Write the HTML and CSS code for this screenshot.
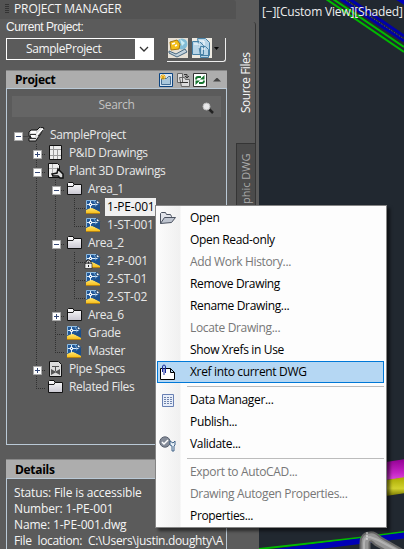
FILE: index.html
```html
<!DOCTYPE html>
<html lang="en">
<head>
<meta charset="utf-8">
<title>Project Manager</title>
<link rel="stylesheet" href="styles.css">
</head>
<body>
<svg class="defs" width="0" height="0" aria-hidden="true">
  <defs>
    <linearGradient id="fold" x1="0" y1="0" x2="0" y2="1"><stop offset="0" stop-color="#fff"/><stop offset="1" stop-color="#c9c7d1"/></linearGradient>
    <linearGradient id="gold" x1="0" y1="0" x2="0" y2="1"><stop offset="0" stop-color="#ffe670"/><stop offset="1" stop-color="#f5b80c"/></linearGradient>
    <linearGradient id="magenta" x1="0" y1="0" x2="0" y2="1"><stop offset="0" stop-color="#920092"/><stop offset=".65" stop-color="#c424c4"/><stop offset="1" stop-color="#dc48dc"/></linearGradient>
    <linearGradient id="yellow" x1="0" y1="0" x2="0" y2="1"><stop offset="0" stop-color="#a9a900"/><stop offset=".6" stop-color="#d2d22e"/><stop offset="1" stop-color="#777700"/></linearGradient>
    <symbol id="plus" viewBox="0 0 9 9"><path fill="#fff" stroke="#aaa" d="M.5.5h8v8h-8z"/><path stroke="#354875" d="M2 4.5h5M4.500 2v5"/></symbol>
    <symbol id="minus" viewBox="0 0 9 9"><path fill="#fff" stroke="#aaa" d="M.5.5h8v8h-8z"/><path stroke="#354875" d="M2 4.5h5"/></symbol>
    <symbol id="folder" viewBox="0 0 16 16"><path fill="url(#fold)" stroke="#111" d="M.5 13.500v-11l1-1H6l1 2h7.500v10z"/><path fill="none" stroke="#222" d="M1 5.500h5l1-2"/></symbol>
    <symbol id="dwg" viewBox="0 0 16 16"><path fill="#215898" d="M0 1h11l3 3v11H0z"/><path fill="none" stroke="#8fbbe0" d="M.5 10V1.500H10"/><path fill="none" stroke="#dcecf8" d="M4.500 2v8M1 5.500h10.500"/><path fill="#215898" stroke="#fff" d="M3.500 4.500h2v2h-2z"/><path fill="none" stroke="#8fbbe0" stroke-width=".8" d="M8 2q2 2 2 6"/><path fill="#fff" stroke="#173960" stroke-width=".6" d="M10.500 1v3.500H14z"/><path fill="url(#gold)" d="M0 11q4-2 6-2 4 1 8 4v2H0z"/><path fill="#1b4f8b" d="M7 9l7-4v7q-3 0-7-3z"/><path stroke="#b58212" d="M0 14.500h14"/></symbol>
    <symbol id="sheet" viewBox="0 0 16 16"><path fill="#ededed" stroke="#111" d="M1.500.5h12v14h-12z"/><path fill="none" stroke="#999" d="M5.500 1v13M2 4.500h11M9.500 5v9M2 10.500h11"/></symbol>
    <symbol id="plant" viewBox="0 0 16 16"><path fill="#eee" stroke="#111" d="M.5.5h9l2 2v12H.5z"/><path fill="none" stroke="#aaa" d="M4.500 1v13M1 5.500h10"/><path fill="#ddd" stroke="#111" stroke-width="1.500" d="M10 6l5 5v4h-3l-2-2H5l-1-2 5-1z"/></symbol>
    <symbol id="valve" viewBox="0 0 16 16"><path fill="#ddd" stroke="#111" d="M1.500.5h9l3 3v12h-12z"/><path stroke="#555" d="M7.500 5v5M4 5.500h7"/><path fill="#555" d="M3 8l4.500 2.500L12 8v6l-4.500-2.500L3 14z"/></symbol>
    <symbol id="root" viewBox="0 0 18 16"><path fill="#ddd" stroke="#111" d="M1 5l2-2h6l3-3 4 1-4 7-3 4-1 2H1v-3h2V9H1z"/><path stroke="#fff" stroke-width="2" d="M3 5h5M3 9h4M9 8l6-6"/><path stroke="#333" d="M2 7.500h6M2 11.500h6M10 9l5-6"/></symbol>
  </defs>
</svg>
<div class="app">
  <aside class="palette">
    <header class="titlebar"><span class="grip"></span><span class="palette-title">PROJECT MANAGER</span></header>
    <div class="palette-body">
      <main class="content">
        <div class="current">Current Project:</div>
        <div class="toolbar">
          <div class="combo"><span>SampleProject</span><i><svg width="10" height="7"><path fill="none" stroke="#333" stroke-width="1.300" d="M1 1l4 4 4-4"/></svg></i></div>
          <div class="tools">
            <svg width="20" height="20"><path fill="#e7e0d5" d="M0 0h20v20H0z"/><circle cx="14" cy="6" r="5.500" fill="#82bdd7"/><path fill="#c9edf5" d="M12 1l5 4-3 3z"/><path fill="#f4bf19" stroke="#a87913" d="M2 4l7-2 3 4-1 5-8 1z"/><path stroke="#fff" stroke-width="1.500" d="M4 6l3-1M7 8l2-1"/><path fill="#c3d2dc" stroke="#47677f" d="M1 13l7 3 9-5 2 3-10 5-8-4z"/></svg>
            <svg width="20" height="20"><path fill="#eeeae1" d="M0 0h20v20H0z"/><path fill="#b8d5e7" stroke="#4881a5" d="M5.500.5h8l4 4v13h-9zM.5 3.500h7l4 4v9h-11zM8.500 8.500h5l3 3v8h-8z"/><path fill="none" stroke="#fff" d="M7 3h5v4M2 6h5v4M10 11h3"/></svg>
            <span class="caret"></span>
          </div>
        </div>
        <section class="pane project">
          <div class="pane-head"><span>Project</span>
            <div class="pane-tools">
              <svg width="14" height="14"><path fill="#d5e5f3" stroke="#0b4380" d="M.5.500h13v13H.5z"/><path fill="#a9c7dc" stroke="#466f95" d="M2.500 11.500v-6h5l2-2h2v8z"/><path stroke="#f2a900" d="M4 1v6M1 4h6M2 2l4 4M6 2L2 6"/></svg>
              <svg width="14" height="14"><path fill="#ddd" stroke="#666" d="M1.500.5h5v9h-5zM3.500 4.500h5l1 2h4v7h-8z"/><path fill="none" stroke="#333" d="M8 1.500h3v3M9 3l2 2 2-2M4 9.500h8"/></svg>
              <svg width="14" height="14"><path fill="#fff" stroke="#333" d="M.5.500h13v13H.5z"/><path fill="none" stroke="#14752e" stroke-width="1.800" d="M3 6.500Q3 4 5 4h3M11 7.500Q11 10 9 10H6"/><path fill="#14752e" d="M7 6.500h4.500V2zM7 7.500H2.500V12z"/></svg>
              <span class="collapse"></span>
            </div>
          </div>
          <div class="search"><span>Search</span><svg width="12" height="12"><path stroke="#222" stroke-width="2.500" d="M7 7l4 4"/><circle cx="4.500" cy="4.500" r="3.500" fill="#e8e8ea" stroke="#bbb"/></svg></div>
          <div class="tree">
            <svg class="guides" width="110" height="270" viewBox="8 125 110 270"><path fill="none" stroke="#303030" stroke-dasharray="1 1" d="M37.500 143v244M37.500 135.500H18M37 153.500h10M37 171.500h10M37 369.500h10M37 387.500h10M56.500 179v173M56 189.500h10M56 243.500h10M56 315.500h10M56 333.500h10M56 351.500h10M75.500 197v29M75 207.500h11M75 225.500h11M75.500 251v47M75 261.500h11M75 279.500h11M75 297.500h11"/></svg>
            <div class="row l0"><svg class="toggle"><use href="#minus"/></svg><svg class="icon root"><use href="#root"/></svg><span>SampleProject</span></div>
            <div class="row l1"><svg class="toggle"><use href="#plus"/></svg><svg class="icon"><use href="#sheet"/></svg><span>P&amp;ID Drawings</span></div>
            <div class="row l1"><svg class="toggle"><use href="#minus"/></svg><svg class="icon"><use href="#plant"/></svg><span>Plant 3D Drawings</span></div>
            <div class="row l2"><svg class="toggle"><use href="#minus"/></svg><svg class="icon"><use href="#folder"/></svg><span>Area_1</span></div>
            <div class="row l3"><svg class="icon"><use href="#dwg"/></svg><span class="selected">1-PE-001</span></div>
            <div class="row l3"><svg class="icon"><use href="#dwg"/></svg><span>1-ST-001</span></div>
            <div class="row l2"><svg class="toggle"><use href="#minus"/></svg><svg class="icon"><use href="#folder"/></svg><span>Area_2</span></div>
            <div class="row l3"><svg class="icon"><use href="#dwg"/><path fill="none" stroke="#222" stroke-width="3" d="M1 11V9.500a1.500 1.500 0 013 0V11"/><path fill="#eee" stroke="#222" stroke-width=".7" d="M-1 10.500h7v5h-7z"/><path fill="none" stroke="#fff" d="M1 10.500V9.500a1.500 1.500 0 013 0v1"/><path stroke="#222" d="M2.500 12v2"/></svg><span>2-P-001</span></div>
            <div class="row l3"><svg class="icon"><use href="#dwg"/></svg><span>2-ST-01</span></div>
            <div class="row l3"><svg class="icon"><use href="#dwg"/></svg><span>2-ST-02</span></div>
            <div class="row l2"><svg class="toggle"><use href="#plus"/></svg><svg class="icon"><use href="#folder"/></svg><span>Area_6</span></div>
            <div class="row l2 leaf"><svg class="icon"><use href="#dwg"/></svg><span>Grade</span></div>
            <div class="row l2 leaf"><svg class="icon"><use href="#dwg"/></svg><span>Master</span></div>
            <div class="row l1"><svg class="toggle"><use href="#plus"/></svg><svg class="icon"><use href="#valve"/></svg><span>Pipe Specs</span></div>
            <div class="row l1 leaf"><svg class="icon"><use href="#folder"/></svg><span>Related Files</span></div>
          </div>
        </section>
        <section class="pane details">
          <div class="pane-head"><span>Details</span></div>
          <div class="facts">
            <div>Status: File is accessible</div><div>Number: 1-PE-001</div><div>Name: 1-PE-001.dwg</div><div class="location">File location: C:\Users\justin.doughty\A</div>
          </div>
        </section>
      </main>
      <nav class="tabs"><div class="tab active">Source Files</div><div class="tab"><span>Orthographic DWG</span></div></nav>
    </div>
  </aside>
  <section class="viewport">
    <svg class="scene" width="146" height="549" viewBox="258 0 146 549">
      <g fill="none" stroke-width="2"><path stroke="#00b900" d="M326-1l78 53M333-1l71 48"/><path stroke="#0000a8" stroke-width="3" d="M339-2l65 43M348-2l56 38"/><path stroke="#0000bd" stroke-width="4" d="M397-2l8 5"/><path stroke="#7171a6" stroke-width=".7" stroke-dasharray="1 2" d="M344-1l60 40"/></g>
      <path fill="url(#magenta)" d="M386 462l19-3v19l-19 2z"/><path fill="url(#yellow)" d="M386 480l19-3v16l-19 3z"/>
      <path fill="none" stroke="#00b900" stroke-width="2" d="M258 549l100-11 46-6M285 549l119-12"/><path fill="none" stroke="#0000b7" stroke-width="3" d="M270 551l88-11 47-6M292 551l112-14"/>
      <path fill="none" stroke="#686868" stroke-width="11" d="M365 552v-9q0-6 5-6 3-1 8 4l26 15"/><path fill="none" stroke="#969696" stroke-width="7" d="M365 552v-9q0-6 5-6 3-1 8 4l26 15"/><path fill="none" stroke="#b2b2b2" stroke-width="2" d="M364 552v-9q0-6 6-6l8 3 26 14"/><path stroke="#eee" stroke-dasharray="2 1" d="M367 532v8"/>
    </svg>
    <div class="view-label">[−][Custom View][Shaded]</div>
  </section>
</div>
<div class="menu">
  <div class="item"><svg width="17" height="16"><path fill="#e1e3e9" stroke="#4b5260" d="M1.500 13.500v-10l1-1h4l1 2h4l1 2v1"/><path fill="#bfc5d0" stroke="#4b5260" d="M1.500 13.500l4-6h11l-4 5z"/></svg><span>Open</span></div>
  <div class="item"><span>Open Read-only</span></div>
  <div class="item disabled"><span>Add Work History...</span></div>
  <div class="item"><span>Remove Drawing</span></div>
  <div class="item"><span>Rename Drawing...</span></div>
  <div class="item disabled"><span>Locate Drawing...</span></div>
  <div class="item"><span>Show Xrefs in Use</span></div>
  <div class="item highlighted"><svg width="17" height="16"><path fill="#fff" stroke="#000" d="M1.500 4.500h10l4 4v7h-14zM11.500 4.500v4h4"/><path fill="none" stroke="#172a9b" d="M3.500 8V3q0-2 1.500-2t1.500 2v6M5 4v7"/></svg><span>Xref into current DWG</span></div>
  <hr>
  <div class="item"><svg width="17" height="16"><path fill="#e8eef9" stroke="#6880b3" d="M3.500 2.500h11v12h-11z"/><path stroke="#6e83ac" stroke-dasharray="2 1" d="M5 5.500h8M5 7.500h8M5 9.500h8M5 11.500h8"/></svg><span>Data Manager...</span></div>
  <div class="item"><span>Publish...</span></div>
  <div class="item"><svg width="17" height="16"><circle cx="6" cy="6" r="5.200" fill="#848b98" stroke="#5a6270"/><path fill="none" stroke="#fff" stroke-width="1.500" d="M3 6l2 2 4-4"/><path fill="#e7f0f7" stroke="#426589" d="M11 5v4l2 1v5h2v-5l1-1V5l-2 2z"/></svg><span>Validate...</span></div>
  <hr>
  <div class="item disabled"><span>Export to AutoCAD...</span></div>
  <div class="item disabled"><span>Drawing Autogen Properties...</span></div>
  <div class="item"><span>Properties...</span></div>
</div>
</body>
</html>
```
FILE: styles.css
```css
* { box-sizing: border-box; }
body { margin: 0; width: 404px; height: 549px; overflow: hidden; position: relative; background: #212830; font: 12px/18px "Open Sans", "Noto Sans", sans-serif; }
svg { display: block; flex: none; }
.defs { position: absolute; }
.app { display: grid; grid-template-columns: 259px 145px; height: 549px; }
.palette { background: #5b5b5b; color: #f5f5f5; min-width: 0; }
.titlebar { height: 19px; width: 236px; display: flex; align-items: center; padding: 0 0 2px 5px; gap: 6px; background: #535353; border-radius: 0 3px 0 0; }
.grip { width: 4px; height: 10px; background: repeating-linear-gradient(#333 0 1px, transparent 1px 2px); }
.palette-title { margin-left: -1px; letter-spacing: -.1px; }
.palette-body { display: flex; height: 530px; }
.content { width: 228px; padding-left: 6px; display: flex; flex-direction: column; flex: none; }
.current { height: 19px; line-height: 16px; font-family: "Liberation Sans", sans-serif; font-size: 12px; letter-spacing: -.42px; }
.toolbar { height: 32px; display: flex; gap: 13px; }
.combo { width: 148px; height: 22px; border: 1px solid #fff; display: flex; justify-content: space-between; align-items: center; padding-left: 19px; }
.combo span { letter-spacing: -.4px; }
.combo i { width: 18px; height: 20px; background: #fff; display: grid; place-items: center; }
.tools { width: 59px; height: 24px; border: solid #eee; border-width: 0 1px 1px 0; border-radius: 0 0 3px; display: flex; gap: 4px; padding-left: 1px; }
.caret { margin: 9px 0 0 -2px; width: 5px; height: 3px; background: #050505; clip-path: polygon(0 0, 100% 0, 50% 100%); }
.pane { width: 221px; }
.project { height: 375px; border: 1px solid #bac9d6; border-top: 0; }
.pane-head { height: 19px; margin: 0 -1px; padding: 0 6px 0 9px; display: flex; justify-content: space-between; align-items: center; background: #adadad; border-top: 1px solid #888; border-bottom: 1px solid #bac9d6; color: #000; font-weight: 700; letter-spacing: -.3px; line-height: 15px; }
.pane-tools { display: flex; align-items: center; gap: 3px; }
.collapse { width: 8px; height: 4px; margin-left: 3px; background: #444; clip-path: polygon(50% 0, 100% 100%, 0 100%); }
.search { margin: 7px 5px 0; height: 21px; background: #656565; color: #c2c2c2; display: flex; justify-content: center; align-items: center; }
.search span { padding-bottom: 3px; margin-left: 2px; letter-spacing: -.35px; }
.search svg { margin: 2px -78px 0 68px; }
.tree { margin-top: 9px; position: relative; color: #e8e8e8; overflow: hidden; }
.guides { position: absolute; left: 0; top: 0; }
.row { position: relative; height: 18px; display: flex; align-items: center; white-space: nowrap; }
.row span { height: 18px; line-height: 17px; padding: 0 2px; margin-left: 3px; letter-spacing: -.36px; }
.row.l3 span { letter-spacing: -.2px; }
.row .selected { color: #000; background: #f0f0f0; }
.toggle { width: 9px; height: 9px; margin: 3px 6px 0 0; }
.icon { width: 16px; height: 16px; overflow: visible; }
.icon.root { width: 18px; margin-left: -1px; margin-right: -1px; }
.l0 { padding-left: 7px; }
.l1 { padding-left: 26px; }
.l2 { padding-left: 45px; }
.l3 { padding-left: 79px; }
.l1.leaf { padding-left: 41px; }
.l2.leaf { padding-left: 60px; }
.details { margin-top: 14px; border: 1px solid #bac9d6; border-width: 0 1px; flex: 1; }
.details .pane-head { height: 20px; }
.facts { padding: 6px 0 0 7px; line-height: 16px; white-space: nowrap; letter-spacing: -.15px; }
.location { word-spacing: 3px; letter-spacing: -.33px; }
.tabs { width: 31px; display: flex; flex-direction: column; align-items: flex-end; padding: 3px 3px 0 0; }
.tab { writing-mode: vertical-rl; transform: rotate(180deg); width: 20px; height: 121px; font-size: 11px; line-height: 20px; border: 1px solid #353535; border-width: 0 0 1px 1px; display: flex; justify-content: center; align-items: center; white-space: nowrap; }
.tab.active { border-bottom: 0; border-top: 0; border-radius: 0 0 0 3px; font-size: 12px; letter-spacing: -.5px; }
.tab + .tab { background: #4b4b4b; color: #aaa; border-width: 1px; justify-content: flex-end; padding-bottom: 10px; }
.viewport { position: relative; background: #212830; overflow: hidden; }
.scene { margin-left: -1px; }
.view-label { position: absolute; left: 3px; top: 3px; color: #eee; white-space: nowrap; letter-spacing: -.18px; }
.menu { position: absolute; left: 155px; top: 205px; width: 232px; border: 1px solid #858585; padding: 1px 2px 0 1px; background: linear-gradient(90deg, #fcfcfc 0, #f0f0f0 24px, #fdfdfd 25px); color: #000; box-shadow: 3px 3px 3px #0008; }
.item { position: relative; height: 22px; line-height: 20px; padding-left: 33px; display: flex; align-items: center; border: 1px solid transparent; border-width: 1px 1px 1px 0; white-space: nowrap; letter-spacing: -.34px; }
.item svg { margin: 0 14px 0 -31px; }
.item.disabled { color: #777; }
.item.highlighted { background: #b5d7f3; border-color: #0078d7; box-shadow: inset 1px 0 #0078d7; }
.menu hr { height: 1px; border: 0; background: #bcbcbc; margin: 3px 0 2px 30px; }
```
